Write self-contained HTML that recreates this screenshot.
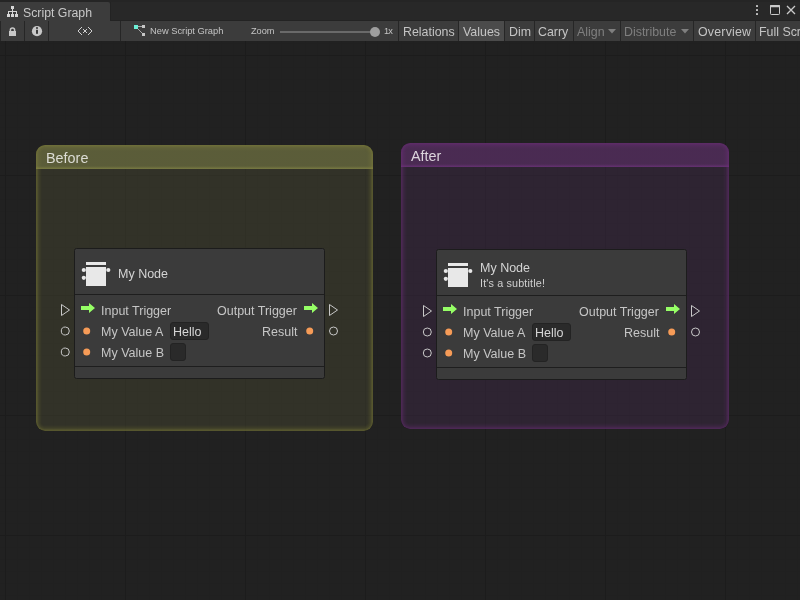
<!DOCTYPE html>
<html><head><meta charset="utf-8">
<style>
*{margin:0;padding:0;box-sizing:border-box}
html,body{width:800px;height:600px;overflow:hidden;background:#212121;font-family:"Liberation Sans",sans-serif;}
.a{position:absolute}
.t{position:absolute;white-space:nowrap;line-height:1;will-change:transform}
#tabbar{left:0;top:0;width:800px;height:21px;background:#282828}
#tab{left:0;top:2px;width:110px;height:19px;background:#3c3c3c;border-top-right-radius:2px}
#toolbar{left:0;top:21px;width:800px;height:20px;background:#3c3c3c}
.sep{position:absolute;top:21px;width:1px;height:20px;background:#262626}
.btn{position:absolute;top:21px;height:20px;background:#3c3c3c}
.bt{color:#c4c4c4;font-size:12.4px}
.dis{color:#7f7f7f}
#graph{left:0;top:41px;width:800px;height:559px;overflow:hidden;background-color:#212121;}
.group{position:absolute;border-radius:9px;overflow:hidden}
.node{position:absolute;width:251px;height:131px;background:#3b3b3b;border:1px solid #1c1c1c;border-radius:2.5px}
.lbl{color:#c6c6c6;font-size:12.5px}
</style></head><body>
<!-- tab bar -->
<div id="tabbar" class="a"></div>
<div class="a" style="left:0;top:0;width:800px;height:2px;background:#252525"></div>
<div class="a" style="left:110px;top:2px;width:1px;height:19px;background:#232323"></div>
<div class="a" style="left:110px;top:20px;width:690px;height:1px;background:#232323"></div>
<div id="tab" class="a"></div>
<svg class="a" style="left:0;top:0" width="22" height="20" viewBox="0 0 22 20">
 <g fill="#d6d6d6">
  <rect x="11" y="6" width="3" height="3"/>
  <rect x="12" y="9" width="1" height="2"/>
  <rect x="8" y="11" width="9" height="1"/>
  <rect x="8" y="11" width="1" height="3"/>
  <rect x="12" y="11" width="1" height="3"/>
  <rect x="16" y="11" width="1" height="3"/>
  <rect x="7" y="14" width="3" height="3"/>
  <rect x="11" y="14" width="3" height="3"/>
  <rect x="15" y="14" width="3" height="3"/>
 </g>
</svg>
<div class="t" style="left:23px;top:6.5px;font-size:12.3px;color:#c8c8c8">Script Graph</div>
<!-- window controls -->
<svg class="a" style="left:755px;top:4px" width="42" height="12" viewBox="0 0 42 12">
 <g fill="#cacaca">
  <rect x="1" y="1" width="2" height="2" rx="0.4"/>
  <rect x="1" y="5" width="2" height="2" rx="0.4"/>
  <rect x="1" y="9" width="2" height="2" rx="0.4"/>
 </g>
 <rect x="15.5" y="1.5" width="9" height="9" rx="0.8" fill="none" stroke="#cacaca" stroke-width="1"/>
 <rect x="15" y="1" width="10" height="2.2" rx="0.8" fill="#cacaca"/>
 <path d="M32 2 L40 10 M40 2 L32 10" stroke="#cacaca" stroke-width="1.3"/>
</svg>
<!-- toolbar -->
<div id="toolbar" class="a"></div>
<div class="a" style="left:0;top:21px;width:1px;height:20px;background:#262626"></div>
<div class="sep" style="left:24px"></div>
<div class="sep" style="left:48px"></div>
<div class="sep" style="left:120px"></div>
<svg class="a" style="left:0;top:21px" width="24" height="20" viewBox="0 0 24 20">
 <path d="M10.4 10 V9 A2.1 2.1 0 0 1 14.6 9 V10" fill="none" stroke="#c8c8c8" stroke-width="1.5"/>
 <rect x="9" y="10" width="7" height="5" fill="#c8c8c8"/>
</svg>
<svg class="a" style="left:24px;top:21px" width="24" height="20" viewBox="0 0 24 20">
 <circle cx="13" cy="10.2" r="5.1" fill="#c8c8c8"/>
 <rect x="12" y="6.2" width="2" height="1.6" fill="#3c3c3c"/>
 <rect x="12" y="8.8" width="2" height="4" fill="#3c3c3c"/>
</svg>
<svg class="a" style="left:74px;top:24px" width="22" height="14" viewBox="0 0 22 14"><g fill="#cfcfcf"><rect x="7" y="3" width="1" height="1"/><rect x="6" y="4" width="1" height="1"/><rect x="5" y="5" width="1" height="1"/><rect x="4" y="6" width="1" height="1"/><rect x="4" y="7" width="1" height="1"/><rect x="5" y="8" width="1" height="1"/><rect x="6" y="9" width="1" height="1"/><rect x="7" y="10" width="1" height="1"/><rect x="14" y="3" width="1" height="1"/><rect x="15" y="4" width="1" height="1"/><rect x="16" y="5" width="1" height="1"/><rect x="17" y="6" width="1" height="1"/><rect x="17" y="7" width="1" height="1"/><rect x="16" y="8" width="1" height="1"/><rect x="15" y="9" width="1" height="1"/><rect x="14" y="10" width="1" height="1"/><rect x="9" y="5" width="1" height="1"/><rect x="12" y="5" width="1" height="1"/><rect x="9" y="8" width="1" height="1"/><rect x="12" y="8" width="1" height="1"/><rect x="10" y="6" width="2" height="2"/></g></svg>
<svg class="a" style="left:130px;top:22px" width="20" height="18" viewBox="0 0 20 18">
 <path d="M8 4.5 L12 4.5 M7.5 6.5 L13 12" stroke="#a8a8a8" stroke-width="1"/>
 <rect x="4" y="3" width="4" height="4" fill="#6cefd6"/>
 <rect x="12" y="3" width="3" height="3" fill="#c6c6c6"/>
 <rect x="12" y="11" width="3" height="3" fill="#c6c6c6"/>
</svg>
<div class="t" style="left:150px;top:27px;font-size:9.3px;color:#c4c4c4">New Script Graph</div>
<div class="t" style="left:251px;top:27px;font-size:9.2px;color:#c4c4c4">Zoom</div>
<div class="a" style="left:280px;top:31px;width:95px;height:2px;background:#6a6a6a"></div>
<div class="a" style="left:370px;top:27px;width:10px;height:10px;border-radius:50%;background:#9e9e9e"></div>
<div class="t" style="left:384px;top:27px;font-size:9.2px;letter-spacing:-0.8px;color:#c4c4c4">1x</div>
<div class="sep" style="left:398px"></div>
<div class="btn" style="left:459px;width:45px;background:#4b4b4b"></div>
<div class="sep" style="left:458px"></div>
<div class="sep" style="left:504px"></div>
<div class="sep" style="left:534px"></div>
<div class="sep" style="left:573px"></div>
<div class="sep" style="left:620px"></div>
<div class="sep" style="left:693px"></div>
<div class="sep" style="left:755px"></div>
<div class="t bt" style="left:403px;top:26px">Relations</div>
<div class="t bt" style="left:463px;top:26px">Values</div>
<div class="t bt" style="left:509px;top:26px">Dim</div>
<div class="t bt" style="left:538px;top:26px">Carry</div>
<div class="t bt dis" style="left:577px;top:26px">Align</div>
<svg class="a" style="left:608px;top:29px" width="9" height="5"><path d="M0 0 H8 L4 4.5 Z" fill="#7f7f7f"/></svg>
<div class="t bt dis" style="left:624px;top:26px">Distribute</div>
<svg class="a" style="left:681px;top:29px" width="9" height="5"><path d="M0 0 H8 L4 4.5 Z" fill="#7f7f7f"/></svg>
<div class="t bt" style="left:698px;top:26px;letter-spacing:0.2px">Overview</div>
<div class="t bt" style="left:759px;top:26px">Full Screen</div>

<!-- graph -->
<div id="graph" class="a">
 <svg class="a" style="left:0;top:0" width="800" height="559">
  <defs>
   <pattern id="minor" x="5" y="2" width="12" height="12" patternUnits="userSpaceOnUse">
    <rect x="0" y="0" width="1" height="12" fill="#202020"/>
    <rect x="0" y="0" width="12" height="1" fill="#202020"/>
   </pattern>
   <pattern id="major" x="5" y="14" width="120" height="120" patternUnits="userSpaceOnUse">
    <rect x="0" y="0" width="1" height="120" fill="#1c1c1c"/>
    <rect x="0" y="0" width="120" height="1" fill="#1c1c1c"/>
   </pattern>
  </defs>
  <rect width="800" height="559" fill="url(#minor)"/>
  <rect width="800" height="559" fill="url(#major)"/>
 </svg>
</div>

<!-- groups -->
<div class="group" style="left:36px;top:145px;width:337px;height:286px;background:rgba(71,71,49,0.45)">
 <div class="a" style="left:0;top:0;width:337px;height:24px;background:linear-gradient(to bottom, rgba(98,100,60,0.85) 0px, rgba(98,100,60,0.85) 21px, rgba(133,135,70,0.85) 24px)"></div>
 <div class="a" style="left:0;top:0;width:337px;height:286px;border-radius:9px;box-shadow:inset 0 0 0.5px 6px rgba(138,138,62,0.03), inset 0 0 0.5px 5px rgba(138,138,62,0.052), inset 0 0 0.5px 4px rgba(138,138,62,0.065), inset 0 0 0.5px 3px rgba(138,138,62,0.093), inset 0 0 0.5px 2px rgba(138,138,62,0.167), inset 0 0 0.5px 1px rgba(138,138,62,0.154)"></div>
</div>
<div class="t" style="left:46px;top:150.5px;font-size:14.4px;color:#dcdcd4">Before</div>

<div class="group" style="left:401px;top:143px;width:328px;height:286px;background:rgba(62,40,71,0.45)">
 <div class="a" style="left:0;top:0;width:328px;height:24px;background:linear-gradient(to bottom, rgba(79,44,88,0.85) 0px, rgba(79,44,88,0.85) 21px, rgba(112,51,126,0.85) 24px)"></div>
 <div class="a" style="left:0;top:0;width:328px;height:286px;border-radius:9px;box-shadow:inset 0 0 0.5px 6px rgba(118,50,132,0.03), inset 0 0 0.5px 5px rgba(118,50,132,0.052), inset 0 0 0.5px 4px rgba(118,50,132,0.065), inset 0 0 0.5px 3px rgba(118,50,132,0.093), inset 0 0 0.5px 2px rgba(118,50,132,0.167), inset 0 0 0.5px 1px rgba(118,50,132,0.154)"></div>
</div>
<div class="t" style="left:411px;top:148.5px;font-size:14.4px;color:#dcd4dc">After</div>
<!-- Node 1 -->
<div class="node" style="left:74px;top:248px">
 <div class="a" style="left:0;top:45px;width:249px;height:1px;background:#1e1e1e"></div>
 <div class="a" style="left:0;top:117px;width:249px;height:1px;background:#1e1e1e"></div>
</div>
<svg class="a" style="left:82px;top:261px;overflow:visible" width="28" height="26" viewBox="0 0 28 26">
 <g fill="#e8e8e8">
  <rect x="4" y="1" width="20" height="3"/>
  <rect x="4" y="6" width="20" height="19"/>
  <circle cx="1.8" cy="9" r="2.1"/>
  <circle cx="1.8" cy="16.8" r="2.1"/>
  <circle cx="26.3" cy="9" r="2.1"/>
 </g>
</svg>
<div class="t lbl" style="left:118px;top:268px;color:#d4d4d4">My Node</div>
<svg class="a" style="left:54px;top:298px" width="291" height="120" viewBox="0 0 291 120">
 <path d="M7.5 6.5 L15.5 12 L7.5 17.5 Z" fill="none" stroke="#c8c8c8" stroke-width="1"/>
 <circle cx="11.3" cy="33" r="4" fill="none" stroke="#c8c8c8" stroke-width="1"/>
 <circle cx="11.3" cy="54" r="4" fill="none" stroke="#c8c8c8" stroke-width="1"/>
 <path d="M275.5 6.5 L283.5 12 L275.5 17.5 Z" fill="none" stroke="#c8c8c8" stroke-width="1"/>
 <circle cx="279.5" cy="33" r="4" fill="none" stroke="#c8c8c8" stroke-width="1"/>
 <g fill="#96ff66">
  <path d="M27 8 H35 V5 L41 10 L35 15 V12 H27 Z"/>
  <path d="M250 8 H258 V5 L264 10 L258 15 V12 H250 Z"/>
 </g>
 <circle cx="32.7" cy="33" r="3.5" fill="#f69b57"/>
 <circle cx="32.7" cy="54" r="3.5" fill="#f69b57"/>
 <circle cx="255.7" cy="33" r="3.5" fill="#f69b57"/>
</svg>
<div class="t lbl" style="left:101px;top:305px">Input Trigger</div>
<div class="t lbl" style="left:101px;top:326px">My Value A</div>
<div class="t lbl" style="left:101px;top:347px">My Value B</div>
<div class="t lbl" style="right:503px;top:305px">Output Trigger</div>
<div class="t lbl" style="right:503px;top:326px">Result</div>
<div class="a" style="left:170px;top:322px;width:39px;height:18px;background:#2a2a2a;border:1px solid #232323;border-radius:3px"></div>
<div class="t lbl" style="left:173px;top:326px;color:#d6d6d6">Hello</div>
<div class="a" style="left:170px;top:343px;width:16px;height:18px;background:#2a2a2a;border:1px solid #232323;border-radius:3px"></div>
<!-- Node 2 -->
<div class="node" style="left:436px;top:249px">
 <div class="a" style="left:0;top:45px;width:249px;height:1px;background:#1e1e1e"></div>
 <div class="a" style="left:0;top:117px;width:249px;height:1px;background:#1e1e1e"></div>
</div>
<svg class="a" style="left:444px;top:262px;overflow:visible" width="28" height="26" viewBox="0 0 28 26">
 <g fill="#e8e8e8">
  <rect x="4" y="1" width="20" height="3"/>
  <rect x="4" y="6" width="20" height="19"/>
  <circle cx="1.8" cy="9" r="2.1"/>
  <circle cx="1.8" cy="16.8" r="2.1"/>
  <circle cx="26.3" cy="9" r="2.1"/>
 </g>
</svg>
<div class="t lbl" style="left:480px;top:262px;color:#d4d4d4">My Node</div>
<div class="t" style="left:480px;top:278px;font-size:10.8px;letter-spacing:0.15px;color:#d0d0d0">It's a subtitle!</div>
<svg class="a" style="left:416px;top:299px" width="291" height="120" viewBox="0 0 291 120">
 <path d="M7.5 6.5 L15.5 12 L7.5 17.5 Z" fill="none" stroke="#c8c8c8" stroke-width="1"/>
 <circle cx="11.3" cy="33" r="4" fill="none" stroke="#c8c8c8" stroke-width="1"/>
 <circle cx="11.3" cy="54" r="4" fill="none" stroke="#c8c8c8" stroke-width="1"/>
 <path d="M275.5 6.5 L283.5 12 L275.5 17.5 Z" fill="none" stroke="#c8c8c8" stroke-width="1"/>
 <circle cx="279.5" cy="33" r="4" fill="none" stroke="#c8c8c8" stroke-width="1"/>
 <g fill="#96ff66">
  <path d="M27 8 H35 V5 L41 10 L35 15 V12 H27 Z"/>
  <path d="M250 8 H258 V5 L264 10 L258 15 V12 H250 Z"/>
 </g>
 <circle cx="32.7" cy="33" r="3.5" fill="#f69b57"/>
 <circle cx="32.7" cy="54" r="3.5" fill="#f69b57"/>
 <circle cx="255.7" cy="33" r="3.5" fill="#f69b57"/>
</svg>
<div class="t lbl" style="left:463px;top:306px">Input Trigger</div>
<div class="t lbl" style="left:463px;top:327px">My Value A</div>
<div class="t lbl" style="left:463px;top:348px">My Value B</div>
<div class="t lbl" style="right:141px;top:306px">Output Trigger</div>
<div class="t lbl" style="right:141px;top:327px">Result</div>
<div class="a" style="left:532px;top:323px;width:39px;height:18px;background:#2a2a2a;border:1px solid #232323;border-radius:3px"></div>
<div class="t lbl" style="left:535px;top:327px;color:#d6d6d6">Hello</div>
<div class="a" style="left:532px;top:344px;width:16px;height:18px;background:#2a2a2a;border:1px solid #232323;border-radius:3px"></div>
</body></html>
